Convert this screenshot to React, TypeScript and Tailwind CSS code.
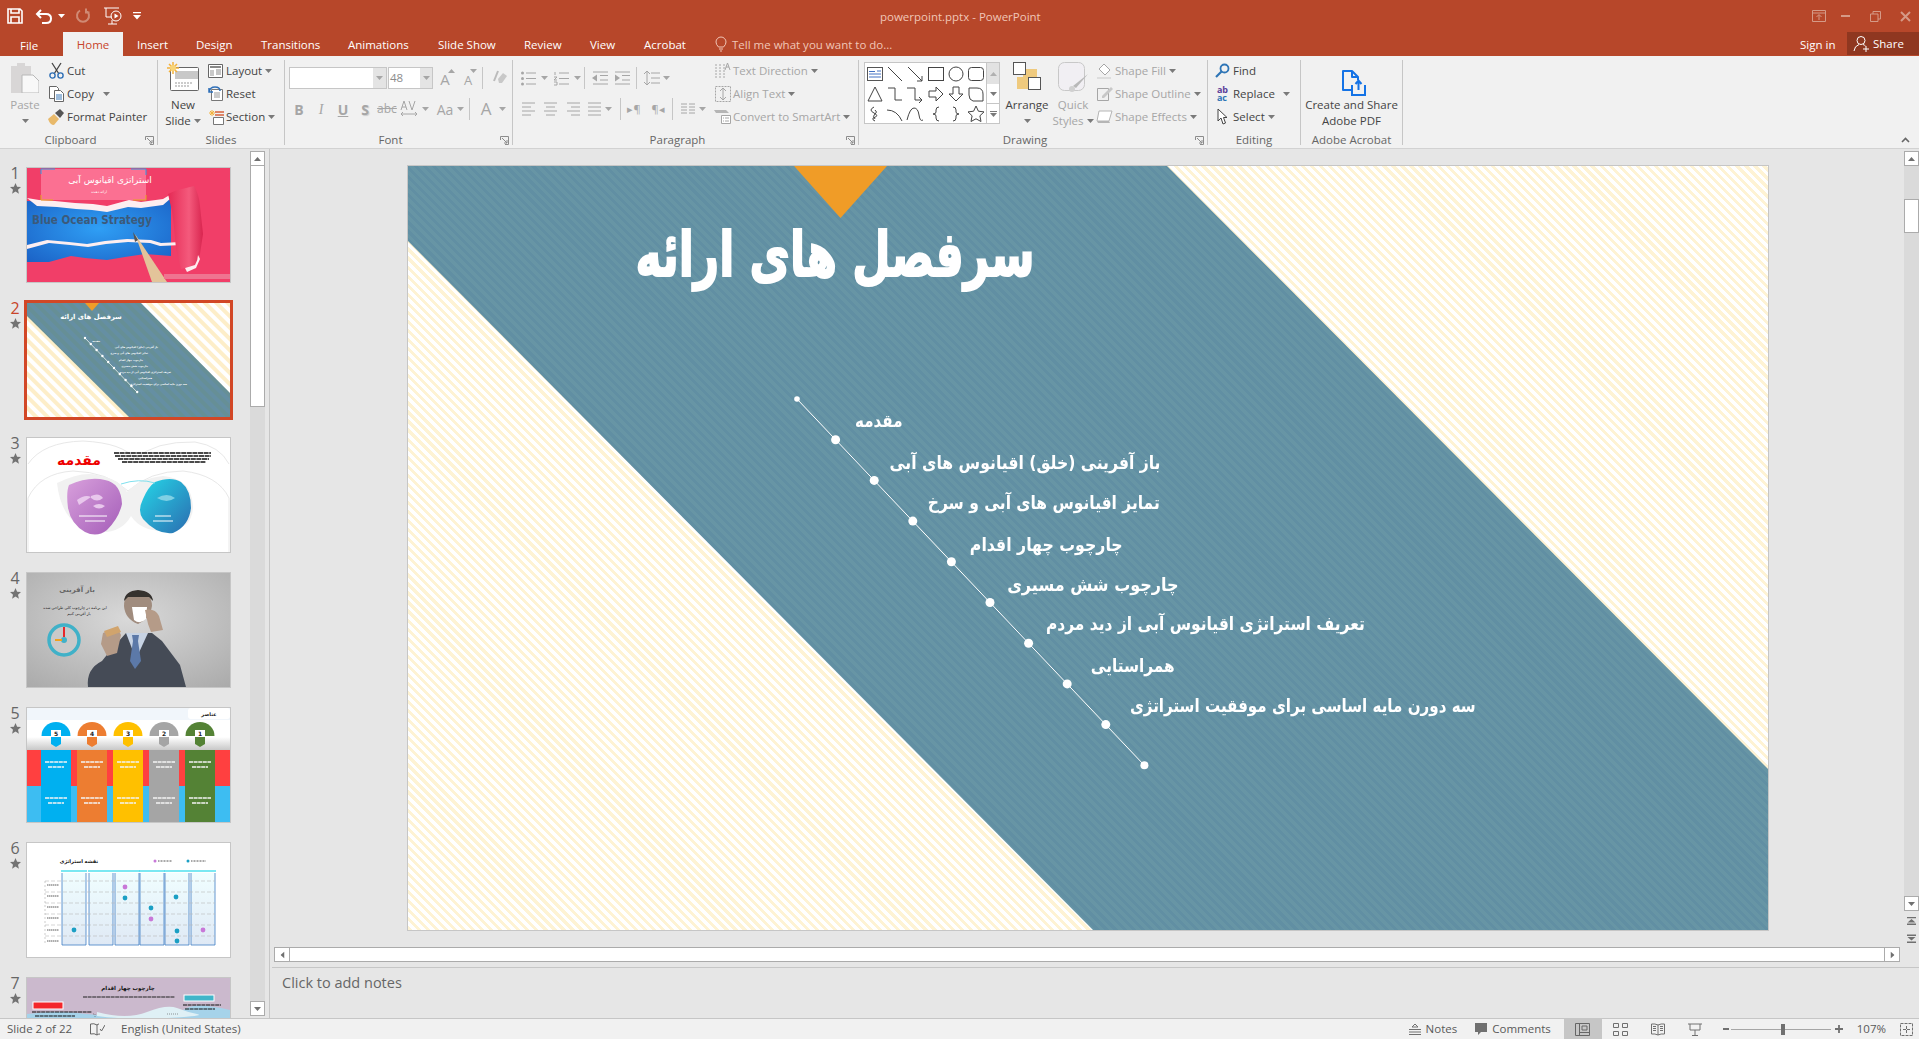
import React from "react";

const GRAY = "#a6a6a6";

function Caret({ className = "" }: { className?: string }) {
  return (
    <svg width="7" height="4" viewBox="0 0 7 4" className={`shrink-0 ${className}`}>
      <path d="M0 0h7L3.5 4z" fill="currentColor" />
    </svg>
  );
}

function Launcher() {
  return (
    <svg width="9" height="9" viewBox="0 0 9 9" className="absolute bottom-[0px] right-[3px]">
      <path d="M.5 4V.5H8.5V8.5H5" fill="none" stroke="#8c8c8c" />
      <path d="M2 2l5 5M7 4v3H4" fill="none" stroke="#8c8c8c" />
    </svg>
  );
}

function Group({ label, className, launcher, children }: { label: string; className: string; launcher?: boolean; children: React.ReactNode }) {
  return (
    <div className={`relative mt-1 flex h-[85px] shrink-0 flex-col border-r border-[#c6c6c6] ${className}`}>
      <div className="flex h-[71px] shrink-0">{children}</div>
      <div className={`h-[14px] text-center text-[#666666] leading-[18px] ${launcher ? "pr-[16px]" : ""}`}>{label}</div>
      {launcher && <Launcher />}
    </div>
  );
}

function Small({ icon, text, caret, disabled, className = "" }: { icon: React.ReactNode; text: string; caret?: boolean; disabled?: boolean; className?: string }) {
  return (
    <div className={`flex h-[23px] items-center whitespace-nowrap ${disabled ? "text-[#a6a6a6]" : "text-[#444444]"} ${className}`}>
      <span className="flex w-[17px] shrink-0 items-center justify-center">{icon}</span>
      <span className="ml-[2px]">{text}</span>
      {caret && <Caret className="ml-[3px] text-[#7a7a7a]" />}
    </div>
  );
}

function Big({ icon, lines, caret, dropBelow, disabled, className }: { icon: React.ReactNode; lines: string[]; caret?: boolean; dropBelow?: boolean; disabled?: boolean; className: string }) {
  return (
    <div className={`flex shrink-0 flex-col items-center leading-[16px] ${disabled ? "text-[#a6a6a6]" : "text-[#444444]"} ${className}`}>
      <div className="flex h-[37px] items-center">{icon}</div>
      {lines.map((l, i) => (
        <span key={l} className="flex items-center whitespace-nowrap">
          {l}
          {caret && i === lines.length - 1 && <Caret className="ml-[3px] text-[#7a7a7a]" />}
        </span>
      ))}
      {dropBelow && <Caret className="mt-[6px] text-[#7a7a7a]" />}
    </div>
  );
}

function Cell({ className = "w-[22px]", children }: { className?: string; children: React.ReactNode }) {
  return <span className={`flex shrink-0 items-center justify-center ${className}`}>{children}</span>;
}

function Lines({ kind }: { kind: "l" | "c" | "r" | "j" }) {
  const d = {
    l: "M1 2h13M1 6h9M1 10h13M1 14h9",
    c: "M1 2h13M3 6h9M1 10h13M3 14h9",
    r: "M1 2h13M5 6h9M1 10h13M5 14h9",
    j: "M1 2h13M1 6h13M1 10h13M1 14h13",
  }[kind];
  return (
    <svg width="15" height="16" viewBox="0 0 15 16">
      <path d={d} stroke={GRAY} fill="none" />
    </svg>
  );
}

const ShapeIcons = [
  <g key="a"><rect x="1.5" y="2.5" width="15" height="13" stroke="#555" fill="#fff" /><path d="M3 6.5h6M11 6h4M3 9h12M3 12h12" stroke="#4472c4" /></g>,
  <path key="b" d="M2 2l14 14" stroke="#444" />,
  <path key="c" d="M2 2l14 14M16 11v5h-5" stroke="#444" fill="none" />,
  <rect key="d" x="1.5" y="2.5" width="15" height="13" stroke="#444" fill="none" />,
  <circle key="e" cx="9" cy="9" r="7" stroke="#444" fill="none" />,
  <rect key="f" x="1.5" y="2.5" width="15" height="13" rx="3" stroke="#444" fill="none" />,
  <path key="g" d="M9 2l7 14H2z" stroke="#444" fill="none" />,
  <path key="h" d="M2 3h7v12h7" stroke="#444" fill="none" />,
  <path key="i" d="M1 3h8v12h7M13 12l3 3-3 3" stroke="#444" fill="none" />,
  <path key="j" d="M2 6h7V2l7 7-7 7v-4H2z" stroke="#444" fill="none" />,
  <path key="k" d="M6 2h6v7h4l-7 7-7-7h4z" stroke="#444" fill="none" />,
  <path key="l" d="M2 3h8q6 0 6 6v7H6q-4-1-4-6z" stroke="#444" fill="none" />,
  <path key="m" d="M8 2q-6 3 0 6t-1 5q-1 2 2 3M9 5q3 2 0 4t0 5" stroke="#444" fill="none" />,
  <path key="n" d="M1 5q10 0 15 11" stroke="#444" fill="none" />,
  <path key="o" d="M1 15Q4 3 8 3t5 7 4 5" stroke="#444" fill="none" />,
  <path key="p" d="M12 2Q9 2 9 5v2q0 2-3 2 3 0 3 2v2q0 3 3 3" stroke="#444" fill="none" />,
  <path key="q" d="M6 2q3 0 3 3v2q0 2 3 2-3 0-3 2v2q0 3-3 3" stroke="#444" fill="none" />,
  <path key="r" d="M9 1l2.4 5.2 5.6.7-4.1 3.9 1.1 5.7L9 13.8l-5 2.7 1.1-5.7L1 6.9l5.6-.7z" stroke="#444" fill="none" />,
];

function TitleBar() {
  return (
    <div className="relative flex h-[32px] items-center bg-[#b7472a] text-[#f1c6b7]">
      <svg width="16" height="16" viewBox="0 0 16 16" className="ml-[7px]">
        <path d="M1 1h12l2 2v12H1z M4 1v4h8V1 M4 15v-6h8v6" fill="none" stroke="#fff" strokeWidth="1.6" />
      </svg>
      <svg width="18" height="16" viewBox="0 0 18 16" className="ml-[12px]">
        <path d="M2 6h9q5 0 5 4.500T11 15H7M6 2L2 6l4 4" fill="none" stroke="#fff" strokeWidth="2" />
      </svg>
      <Caret className="ml-[5px] text-white" />
      <svg width="16" height="16" viewBox="0 0 16 16" className="ml-[10px]">
        <path d="M11 2.500a6 6 0 1 1-6 0M11 0.500v4h3.500" fill="none" stroke="#d08a74" strokeWidth="2" />
      </svg>
      <svg width="20" height="20" viewBox="0 0 20 20" className="ml-[12px]">
        <path d="M1 2h15M3 2v9h6M5 18h9M9 14v4" fill="none" stroke="#fff" />
        <circle cx="13" cy="10" r="5" fill="none" stroke="#fff" />
        <path d="M11.500 7.500v5l4-2.500z" fill="#fff" />
      </svg>
      <svg width="8" height="8" viewBox="0 0 8 8" className="ml-[10px]">
        <path d="M0 0h8v1.300H0zM0 3h8L4 7.500z" fill="#fff" />
      </svg>
      <span className="absolute left-[880px] top-[9px] whitespace-nowrap leading-[16px]">powerpoint.pptx - PowerPoint</span>
      <div className="ml-auto flex items-center">
        <svg width="14" height="12" viewBox="0 0 14 12" className="mr-[15px]">
          <path d="M.5.500h13v11H.5zM.5 3h13M7 10V5M4.500 7L7 4.500 9.500 7" fill="none" stroke="#d59a87" />
        </svg>
        <span className="mr-[20px] h-[2px] w-[9px] bg-[#d59a87]" />
        <svg width="11" height="11" viewBox="0 0 11 11" className="mr-[19px]">
          <path d="M.5 3h7.500v7.500H.5zM3 3V.5h7.500V8H8" fill="none" stroke="#d59a87" />
        </svg>
        <svg width="11" height="11" viewBox="0 0 11 11" className="mr-[8px]">
          <path d="M1 1l9 9M10 1l-9 9" stroke="#d59a87" strokeWidth="2" />
        </svg>
      </div>
    </div>
  );
}

function TabBar() {
  const tab = "absolute top-[3px] leading-[20px] whitespace-nowrap";
  return (
    <div className="relative h-[24px] bg-[#b7472a] text-white">
      <span className="absolute left-[20px] top-[4px] leading-[20px]">File</span>
      <span className="absolute left-[63px] top-0 h-[24px] w-[60px] bg-[#f1f1f1] pt-[3px] text-center leading-[20px] text-[#c8452a]">Home</span>
      <span className={`${tab} left-[137px]`}>Insert</span>
      <span className={`${tab} left-[196px]`}>Design</span>
      <span className={`${tab} left-[261px]`}>Transitions</span>
      <span className={`${tab} left-[348px]`}>Animations</span>
      <span className={`${tab} left-[438px]`}>Slide Show</span>
      <span className={`${tab} left-[524px]`}>Review</span>
      <span className={`${tab} left-[590px]`}>View</span>
      <span className={`${tab} left-[644px]`}>Acrobat</span>
      <svg width="12" height="16" viewBox="0 0 12 16" className="absolute left-[715px] top-[4px]">
        <path d="M3.500 11Q1 8.500 1 6a5 5 0 0 1 10 0q0 2.500-2.500 5zM4 13h4M5 15h2" fill="none" stroke="#f1c6b7" />
      </svg>
      <span className={`${tab} left-[732px] text-[#f1c6b7]`}>Tell me what you want to do...</span>
      <span className={`${tab} left-[1800px]`}>Sign in</span>
      <div className="absolute left-[1847px] top-0 flex h-[23px] w-[72px] items-center bg-[#8f3720] pl-[6px]">
        <svg width="17" height="17" viewBox="0 0 17 17">
          <circle cx="8" cy="5.500" r="4" fill="none" stroke="#fff" />
          <path d="M1 16q.5-5 5-6.500M10 9.500q1.500.5 2.500 1.500M10 14h6M13 11v6" fill="none" stroke="#fff" />
        </svg>
        <span className="ml-[3px]">Share</span>
      </div>
    </div>
  );
}

function Ribbon() {
  return (
    <div className="relative flex h-[93px] border-b border-[#d2d2d2] bg-[#f1f1f1] text-[#444444]">
      <Group label="Clipboard" className="w-[158px]" launcher>
        <Big
          className="ml-[5px] w-[40px]"
          disabled
          dropBelow
          lines={["Paste"]}
          icon={
            <svg width="28" height="30" viewBox="0 0 28 30" className="-mt-[2px]">
              <path d="M0 3h6V0h8v3h6v27H0z" fill="#d8d6d6" />
              <path d="M11 12h11l6 6v12H11z" fill="#f8f8f8" stroke="#b8b8b8" />
            </svg>
          }
        />
        <div className="-mt-[1px] ml-[3px] flex flex-col">
          <Small text="Cut" icon={<svg width="15" height="17" viewBox="0 0 15 17"><path d="M3 1l7 11M12 1L5 12" stroke="#444" strokeWidth="1.300" /><circle cx="3.500" cy="13.500" r="2.600" fill="none" stroke="#2f6fb5" strokeWidth="1.400" /><circle cx="11.500" cy="13.500" r="2.600" fill="none" stroke="#2f6fb5" strokeWidth="1.400" /></svg>} />
          <div className="flex items-center">
            <Small text="Copy" icon={<svg width="15" height="16" viewBox="0 0 15 16"><path d="M.5.500h7l2 2v10H.5z" fill="#fff" stroke="#666" /><path d="M5.500 4.500h6l3 3v8h-9z" fill="#fff" stroke="#666" /><path d="M7 9h6M7 11h6M7 13h6" stroke="#3b78b8" /></svg>} />
            <Caret className="ml-[9px] text-[#7a7a7a]" />
          </div>
          <Small text="Format Painter" icon={<svg width="17" height="17" viewBox="0 0 17 17"><path d="M0 11l6-5 5 5-5 6q-4 0-6-6z" fill="#e8b96a" /><path d="M7 5l5-4 4 4-4 5z" fill="#555" /></svg>} />
        </div>
      </Group>

      <Group label="Slides" className="w-[127px]">
        <Big
          className="ml-[1px] w-[48px]"
          caret
          lines={["New", "Slide"]}
          icon={
            <svg width="32" height="29" viewBox="0 0 32 29" className="-mt-[4px]">
              <rect x="3.500" y="5.500" width="28" height="23" rx="1" fill="#fff" stroke="#666" />
              <rect x="8" y="9" width="23" height="8" fill="#c8c8c8" />
              <path d="M8 21h18M8 24h14" stroke="#999" strokeDasharray="2 1" />
              <path d="M6 0v12M0 6h12M2 2l8 8M10 2l-8 8" stroke="#f3b13b" strokeWidth="1.500" />
              <circle cx="6" cy="6" r="3" fill="#f8d477" />
            </svg>
          }
        />
        <div className="-mt-[1px] flex flex-col">
          <Small text="Layout" caret icon={<svg width="15" height="14" viewBox="0 0 15 14"><path d="M.5.500h14v13H.5z" fill="#fff" stroke="#666" /><path d="M2 2h11v2H2z" fill="#888" /><path d="M2 6h4v6H2z" fill="#c8c8c8" /><path d="M8 6h5M8 8h5M8 10h5" stroke="#888" /></svg>} />
          <Small text="Reset" icon={<svg width="15" height="15" viewBox="0 0 15 15"><path d="M3.500 3.500h11v11h-11z" fill="#fff" stroke="#777" /><path d="M6 7h6M6 9h6M6 11h6" stroke="#999" /><path d="M1 6q1-5 6-5t5 4M1 2v4h4" fill="none" stroke="#2e6fb8" strokeWidth="1.500" /></svg>} />
          <Small text="Section" caret icon={<svg width="16" height="16" viewBox="0 0 16 16"><path d="M4 1v6M1 4h6M2 2l4 4M6 2L2 6" stroke="#f3b13b" /><path d="M7 3h9M7 6h9" stroke="#d8613a" strokeWidth="1.400" /><path d="M5.500 8.500h10v7h-10z" fill="#fff" stroke="#777" /></svg>} />
        </div>
      </Group>

      <Group label="Font" className="w-[228px]" launcher>
        <div className="flex w-full flex-col pl-[3px] text-[#a6a6a6]">
          <div className="mt-[7px] flex h-[22px] items-center">
            <div className="ml-[1px] flex h-[22px] w-[98px] border border-[#c6c6c6] bg-white">
              <span className="flex-1" />
              <span className="flex w-[13px] items-center justify-center bg-[#e4e4e4]"><Caret /></span>
            </div>
            <div className="ml-[1px] flex h-[22px] w-[45px] border border-[#c6c6c6] bg-white">
              <span className="flex-1 pl-[1px] leading-[20px] text-[#8c8c8c]">48</span>
              <span className="flex w-[12px] items-center justify-center bg-[#e4e4e4]"><Caret /></span>
            </div>
            <Cell className="ml-[1px] w-[22px]"><span className="relative pt-[2px] text-[15px] leading-[18px]">A<Caret className="absolute -right-[5px] top-[1px] rotate-180" /></span></Cell>
            <Cell className="ml-[1px] w-[22px]"><span className="relative pt-[3px] text-[13px] leading-[18px]">A<Caret className="absolute -right-[5px] top-[1px]" /></span></Cell>
            <span className="ml-[3px] h-[22px] w-px bg-[#c6c6c6]" />
            <Cell className="ml-[4px] w-[24px]">
              <svg width="17" height="16" viewBox="0 0 17 16"><path d="M3 11L7 1" stroke="#bbb" strokeWidth="2" /><path d="M7 9l5-6 4 3-5 7H8z" fill="#c8c8c8" /></svg>
            </Cell>
          </div>
          <div className="mt-[9px] flex h-[22px] items-center text-[14px]">
            <Cell><b>B</b></Cell>
            <Cell><i className="font-['Liberation_Serif',serif]">I</i></Cell>
            <Cell><span className="font-bold underline">U</span></Cell>
            <Cell><b className="[text-shadow:1px_1px_1px_#ccc]">S</b></Cell>
            <Cell><span className="text-[12px] line-through">abc</span></Cell>
            <Cell>
              <svg width="19" height="18" viewBox="0 0 19 18"><path d="M1 10L4 1l3 9M2 7h4M9 1l3 9 3-9M1 14h16M3 12l-2 2 2 2M15 12l2 2-2 2" fill="none" stroke={GRAY} /></svg>
            </Cell>
            <Cell className="w-[10px]"><Caret /></Cell>
            <Cell className="ml-[3px] w-[24px]">Aa</Cell>
            <Cell className="w-[7px]"><Caret /></Cell>
            <span className="ml-[5px] h-[22px] w-px bg-[#c6c6c6]" />
            <Cell className="ml-[5px] w-[22px]"><span className="text-[17px] font-medium">A</span></Cell>
            <Cell className="w-[10px]"><Caret /></Cell>
          </div>
        </div>
      </Group>

      <Group label="Paragraph" className="w-[346px]" launcher>
        <div className="flex w-[203px] flex-col pl-[7px] text-[#a6a6a6]">
          <div className="mt-[7px] flex h-[22px] items-center">
            <Cell className="w-[16px]">
              <svg width="15" height="15" viewBox="0 0 15 15"><path d="M5 2h10M5 7.500h10M5 13h10" stroke={GRAY} /><circle cx="1.500" cy="2" r="1.500" fill={GRAY} /><circle cx="1.500" cy="7.500" r="1.500" fill={GRAY} /><circle cx="1.500" cy="13" r="1.500" fill={GRAY} /></svg>
            </Cell>
            <Cell className="ml-[3px] w-[10px]"><Caret /></Cell>
            <Cell className="ml-[4px] w-[16px]">
              <svg width="15" height="15" viewBox="0 0 15 15"><path d="M5 2h10M5 7.500h10M5 13h10M1 1v3M0 6h3L0 9h3M0 11h3v3H0" fill="none" stroke={GRAY} /></svg>
            </Cell>
            <Cell className="ml-[3px] w-[10px]"><Caret /></Cell>
            <span className="ml-[2px] h-[22px] w-px bg-[#c6c6c6]" />
            <Cell className="ml-[6px] w-[18px]">
              <svg width="16" height="14" viewBox="0 0 16 14"><path d="M1 1h15M8 4.500h8M8 9h8M1 13h15" stroke={GRAY} /><path d="M0 7l5-3.500v7z" fill={GRAY} /></svg>
            </Cell>
            <Cell className="ml-[4px] w-[18px]">
              <svg width="16" height="14" viewBox="0 0 16 14"><path d="M1 1h15M8 4.500h8M8 9h8M1 13h15" stroke={GRAY} /><path d="M6 7L1 3.500v7z" fill={GRAY} /></svg>
            </Cell>
            <span className="ml-[5px] h-[22px] w-px bg-[#c6c6c6]" />
            <Cell className="ml-[6px] w-[18px]">
              <svg width="16" height="16" viewBox="0 0 16 16"><path d="M7 3h9M7 8h9M7 13h9M3 2v12M0 4l3-3 3 3M0 12l3 3 3-3" fill="none" stroke={GRAY} /></svg>
            </Cell>
            <Cell className="w-[10px]"><Caret /></Cell>
          </div>
          <div className="mt-[9px] flex h-[22px] items-center">
            <Cell className="ml-[-1px] w-[18px]"><Lines kind="l" /></Cell>
            <Cell className="ml-[4px] w-[18px]"><Lines kind="c" /></Cell>
            <Cell className="ml-[5px] w-[18px]"><Lines kind="r" /></Cell>
            <Cell className="ml-[3px] w-[18px]"><Lines kind="j" /></Cell>
            <Cell className="w-[10px]"><Caret /></Cell>
            <span className="ml-[7px] h-[22px] w-px bg-[#c6c6c6]" />
            <Cell className="ml-[3px] w-[20px]"><span className="text-[11px]">▸¶</span></Cell>
            <Cell className="ml-[4px] w-[20px]"><span className="text-[11px]">¶◂</span></Cell>
            <span className="ml-[4px] h-[22px] w-px bg-[#c6c6c6]" />
            <Cell className="ml-[6px] w-[18px]">
              <svg width="14" height="12" viewBox="0 0 14 12"><path d="M0 1h6M8 1h6M0 4h6M8 4h6M0 7h6M8 7h6M0 10h6M8 10h6" stroke={GRAY} /></svg>
            </Cell>
            <Cell className="w-[10px]"><Caret /></Cell>
          </div>
        </div>
        <div className="-ml-[2px] -mt-[1px] flex flex-col">
          <Small disabled caret text="Text Direction" icon={<svg width="16" height="18" viewBox="0 0 16 18"><path d="M1 2v14M5 2v14M9 2v14" stroke={GRAY} strokeDasharray="2 1" /><path d="M10 8l2.500-7L15 8M11 5h3" fill="none" stroke={GRAY} /></svg>} />
          <Small disabled caret text="Align Text" icon={<svg width="16" height="16" viewBox="0 0 16 16"><path d="M.5.500h15v15H.5z" fill="none" stroke={GRAY} strokeDasharray="2 1" /><path d="M8 3v10M5 5l3-3 3 3M5 11l3 3 3-3" fill="none" stroke={GRAY} /></svg>} />
          <Small disabled caret text="Convert to SmartArt" icon={<svg width="17" height="15" viewBox="0 0 17 15"><path d="M0 1h12l3 3H2z" fill="#b5b5b5" /><path d="M7.500 6.500h9v8h-9z" fill="#fff" stroke={GRAY} /><path d="M9 9h1M11 9h4M9 12h1M11 12h4" stroke={GRAY} /></svg>} />
        </div>
      </Group>

      <Group label="Drawing" className="w-[349px]" launcher>
        <div className="ml-[5px] mt-[2px] flex h-[62px] w-[136px] shrink-0 border border-[#c6c6c6] bg-white">
          <div className="grid h-full w-[122px] grid-cols-6 content-start pt-[1px]">
            {ShapeIcons.map((s, i) => (
              <span key={i} className="flex h-[20px] w-[20px] items-center justify-center">
                <svg width="18" height="18" viewBox="0 0 18 18">{s}</svg>
              </span>
            ))}
          </div>
          <div className="flex w-[13px] flex-col border-l border-[#c6c6c6] text-[#7a7a7a]">
            <span className="flex h-[21px] items-center justify-center bg-[#e2e2e2] text-[#b0b0b0]"><Caret className="rotate-180" /></span>
            <span className="flex h-[20px] items-center justify-center border-b border-[#c6c6c6]"><Caret /></span>
            <span className="flex flex-1 flex-col items-center justify-center gap-[1px]"><span className="h-px w-[7px] bg-[#7a7a7a]" /><Caret /></span>
          </div>
        </div>
        <Big
          className="w-[54px]"
          dropBelow
          lines={["Arrange"]}
          icon={
            <svg width="28" height="28" viewBox="0 0 28 28" className="-mt-[6px]">
              <rect x="10" y="7" width="14" height="14" fill="#efca7e" />
              <rect x="4" y="15" width="12" height="12" fill="#efca7e" />
              <rect x=".5" y=".5" width="12" height="12" fill="#fff" stroke="#555" />
              <rect x="15.500" y="15.500" width="12" height="12" fill="#fff" stroke="#555" />
            </svg>
          }
        />
        <Big
          className="w-[38px]"
          disabled
          caret
          lines={["Quick", "Styles"]}
          icon={
            <svg width="30" height="32" viewBox="0 0 30 32" className="-mt-[1px]">
              <rect x=".5" y=".5" width="26" height="28" rx="6" fill="#f1eff3" stroke="#c8c8c8" />
              <path d="M30 12L18 26l-3-2z" fill="#b8b8b8" />
              <circle cx="14" cy="27" r="3" fill="#d0d0d0" />
            </svg>
          }
        />
        <div className="ml-[4px] -mt-[1px] flex flex-col">
          <Small disabled caret text="Shape Fill" icon={<svg width="16" height="16" viewBox="0 0 16 16"><path d="M7 1l6 6-5 5-6-6z" fill="#fff" stroke={GRAY} /><path d="M0 14h14v2H0z" fill="#ddd" /></svg>} />
          <Small disabled caret text="Shape Outline" icon={<svg width="16" height="15" viewBox="0 0 16 15"><path d="M.5 2.500h11v12H.5z" fill="none" stroke={GRAY} /><path d="M5 10L14 1l2 2-9 9H5z" fill="#c8c8c8" /></svg>} />
          <Small disabled caret text="Shape Effects" icon={<svg width="17" height="15" viewBox="0 0 17 15"><path d="M3 2h13l-3 10H1z" fill="#fff" stroke="#b5b5b5" /><path d="M1 12h12l1 2H2z" fill="#b5b5b5" /></svg>} />
        </div>
      </Group>

      <Group label="Editing" className="w-[93px]">
        <div className="-mt-[1px] ml-[6px] flex flex-col">
          <Small text="Find" icon={<svg width="15" height="15" viewBox="0 0 15 15"><circle cx="9.500" cy="5.500" r="4" fill="none" stroke="#2e75b6" strokeWidth="1.800" /><path d="M6.500 8.500L1 14" stroke="#2e75b6" strokeWidth="2.200" /></svg>} />
          <div className="flex items-center">
            <Small text="Replace" icon={<span className="flex flex-col text-[9px] font-bold leading-[8px]"><span className="text-[#5b3f99]">ab</span><span className="text-[#2e75b6]">ac</span></span>} />
            <Caret className="ml-[8px] text-[#7a7a7a]" />
          </div>
          <Small text="Select" caret icon={<svg width="11" height="17" viewBox="0 0 11 17"><path d="M1 1v12l3-3 2 6 2.500-1-2-5.500H10z" fill="#fff" stroke="#444" /></svg>} />
        </div>
      </Group>

      <Group label="Adobe Acrobat" className="w-[102px]">
        <Big
          className="w-full"
          lines={["Create and Share", "Adobe PDF"]}
          icon={
            <svg width="24" height="26" viewBox="0 0 24 26" className="ml-[4px] mt-[8px]">
              <path d="M9 20H1V1h9l6 6v3M10 1v6h6" fill="none" stroke="#1473e6" strokeWidth="2" strokeLinejoin="round" />
              <path d="M10 15v10h13V15M16.500 20V11M13.500 14l3-3.500 3 3.500" fill="none" stroke="#1473e6" strokeWidth="2" />
            </svg>
          }
        />
      </Group>

      <svg width="9" height="6" viewBox="0 0 9 6" className="absolute bottom-[5px] right-[9px]">
        <path d="M1 5l3.500-3.500L8 5" fill="none" stroke="#666" strokeWidth="1.600" />
      </svg>
    </div>
  );
}

function Thumb1() {
  return (
    <svg viewBox="0 0 203 114" className="h-full w-full" preserveAspectRatio="none">
      <defs>
        <radialGradient id="t1b" cx=".5" cy=".5" r=".7">
          <stop offset="0" stopColor="#2f9ff5" />
          <stop offset="1" stopColor="#1b62c6" />
        </radialGradient>
        <linearGradient id="t1c" x1="0" x2="1">
          <stop offset="0" stopColor="#e52a55" />
          <stop offset=".6" stopColor="#f45a7c" />
          <stop offset="1" stopColor="#d9254f" />
        </linearGradient>
      </defs>
      <rect width="203" height="114" fill="#f13e68" />
      <path d="M0 33l28 1 30 2 10 1 12 2 20-5 14 1 22-3 8-5v61l-26-2-20 3-18 3-22-2-14-2-22 6H0z" fill="url(#t1b)" />
      <path d="M0 30l12 2 16 1 20 2 18 1 14 2 22-6 12 2 22-3 10-6 14-3 7 2-10 6-14 1-7 6-22 3-13-1-21 5-15-2-16-1-19-2-20-1z" fill="#fdeef0" />
      <path d="M0 77l20-5 22 2 18 2 18-3 22-2 24 1 10 3 20-1 1 3-22 1-10-3-22-1-22 2-18 3-18-2-21-2-22 6z" fill="#fdeef0" />
      <rect x="14" y="1" width="105" height="31" fill="#fb7092" />
      <text x="83" y="15" textAnchor="middle" direction="rtl" fontFamily="DejaVu Sans" fontSize="9" fill="#fff">استراتژی اقیانوس آبی</text>
      <text x="72" y="25" textAnchor="middle" fontFamily="DejaVu Sans" fontSize="3.500" fill="#fff">ارائه دهنده</text>
      <path d="M14 6V1h14M104 1h15v6" fill="none" stroke="#2e9be6" />
      <path d="M14 27v5h12M106 32h13v-5" fill="none" stroke="#e4a81e" />
      <text x="5" y="56" fontFamily="DejaVu Sans" fontWeight="700" fontSize="11.500" textLength="120" lengthAdjust="spacingAndGlyphs" fill="#3c5a7a">Blue Ocean Strategy</text>
      <path d="M141 26q8-4 14-5l12-3q5 8 6 20l3 28-3 20-5 11-14 4-3-12-2-8-2-22-2-16z" fill="url(#t1c)" />
      <path d="M158 100l10-3q3-5 3-10l2 4-4 9-9 4z" fill="#fdeef0" />
      <path d="M108 66l6 9 26 39h-15z" fill="#e3c49a" />
      <path d="M106 64l5 8-3 2z" fill="#555" />
      <rect x="137" y="106" width="66" height="5" fill="#ef7490" />
    </svg>
  );
}

function Thumb2() {
  const lines: [string, number, number][] = [
    ["مقدمه", 73, 39],
    ["باز آفرینی (خلق) اقیانوس های آبی", 131, 45],
    ["تمایز اقیانوس های آبی و سرخ", 121, 51],
    ["چارچوب چهار اقدام", 116, 58],
    ["چارچوب شش مسیری", 121, 64],
    ["تعریف استراتژی اقیانوس آبی از دید مردم", 144, 70],
    ["همراستایی", 125, 76],
    ["سه دورن مایه اساسی برای موفقیت استراتژی", 160, 82],
  ];
  return (
    <svg viewBox="0 0 203 114" className="h-full w-full" preserveAspectRatio="none">
      <defs>
        <pattern id="t2y" width="8" height="8" patternUnits="userSpaceOnUse" patternTransform="rotate(45)">
          <rect width="8" height="8" fill="#fff" />
          <rect width="8" height="4" fill="#fdeec9" />
        </pattern>
        <pattern id="t2t" width="8" height="8" patternUnits="userSpaceOnUse" patternTransform="rotate(45)">
          <rect width="8" height="8" fill="#658fa3" />
          <rect width="8" height="4" fill="#668f96" />
        </pattern>
      </defs>
      <rect width="203" height="114" fill="url(#t2y)" />
      <path d="M0 0h114l89 90v24H102L0 13z" fill="url(#t2t)" />
      <path d="M58 0h14l-7 8z" fill="#f09c27" />
      <text x="64" y="16" textAnchor="middle" direction="rtl" fontFamily="DejaVu Sans" fontWeight="700" fontSize="6.800" fill="#fff">سرفصل های ارائه</text>
      <path d="M58 35l52 54" stroke="#fff" strokeWidth=".7" />
      {[0, 1, 2, 3, 4, 5, 6, 7, 8, 9].map((i) => (
        <circle key={i} cx={58 + i * 5.800} cy={35 + i * 6} r="1.200" fill="#fff" />
      ))}
      {lines.map(([t, x, y]) => (
        <text key={t} x={x} y={y} direction="rtl" textAnchor="start" fontFamily="DejaVu Sans" fontWeight="700" fontSize="2.500" fill="#fff">{t}</text>
      ))}
    </svg>
  );
}

function Thumb3() {
  return (
    <svg viewBox="0 0 203 114" className="h-full w-full" preserveAspectRatio="none">
      <defs>
        <linearGradient id="t3p" x1="0" x2="1" y1="0" y2="1">
          <stop offset="0" stopColor="#d8a0dc" />
          <stop offset="1" stopColor="#a45db8" />
        </linearGradient>
        <linearGradient id="t3c" x1="0" x2="1" y1="0" y2="1">
          <stop offset="0" stopColor="#25d7e8" />
          <stop offset="1" stopColor="#2b6cb0" />
        </linearGradient>
      </defs>
      <rect width="203" height="114" fill="#fff" />
      <path d="M1 26q15-22 55-23 40 2 52 18 20-18 60-17 25 4 34 22M1 114V60q12-25 45-27 35 1 55 20 22-20 55-20 35 4 46 27v54" fill="none" stroke="#e8e8e8" />
      <path d="M30 45q25-12 40-8 22 4 30 17 14-14 36-16 28 2 30 30 0 25-30 25-22 0-32-15-10 18-34 16-35-5-40-49z" fill="#f1f1f1" />
      <path d="M42 47q20-9 36-5 16 3 17 24-3 14-15 26-10 8-22 2-14-8-17-24-2-16 1-23z" fill="url(#t3p)" />
      <path d="M128 44q16-6 26 0 10 8 10 26-2 18-18 25-16 2-30-14-6-8 0-20 5-12 12-17z" fill="url(#t3c)" />
      <path d="M94 46q18-6 34-1" fill="none" stroke="#7fe0ee" />
      <text x="52" y="27" textAnchor="middle" direction="rtl" fontFamily="DejaVu Sans" fontWeight="700" fontSize="14" fill="#ee0000">مقدمه</text>
      <path d="M87 15h97M88 18h96M91 21h91M95 24h84" stroke="#111" strokeWidth="1.500" strokeDasharray="5 .6" />
      <path d="M52 78h28M58 83h20M128 78h16M126 83h20" stroke="#fff" strokeWidth="1" />
      <path d="M50 62q8-6 14-3l-12 8zM64 58q8-4 12 2-6 5-12 0zM66 68q6-4 12 0-6 5-12 0z" fill="#e8c7ec" />
      <path d="M130 60q10-6 18 0-8 6-18 0z" fill="#7fd0e4" />
    </svg>
  );
}

function Thumb4() {
  return (
    <svg viewBox="0 0 203 114" className="h-full w-full" preserveAspectRatio="none">
      <defs>
        <radialGradient id="t4b" cx=".5" cy=".4" r=".8">
          <stop offset="0" stopColor="#d9d9d9" />
          <stop offset="1" stopColor="#a9a9a9" />
        </radialGradient>
        <filter id="t4f"><feGaussianBlur stdDeviation=".6" /></filter>
      </defs>
      <rect width="203" height="114" fill="url(#t4b)" />
      <text x="50" y="19" textAnchor="middle" direction="rtl" fontFamily="DejaVu Sans" fontWeight="700" fontSize="7" fill="#666">باز آفرینی</text>
      <text x="48" y="36" textAnchor="middle" direction="rtl" fontFamily="DejaVu Sans" fontSize="3.800" fill="#222">این برنامه در چارچوب کلی طراحی شده</text>
      <text x="52" y="42" textAnchor="middle" direction="rtl" fontFamily="DejaVu Sans" fontSize="3.800" fill="#222">باز آفرینی کنیم</text>
      <circle cx="37" cy="67" r="15" fill="#c9c9c9" stroke="#40b1c8" strokeWidth="3.500" />
      <circle cx="37" cy="67" r="3" fill="#40b1c8" />
      <path d="M37 54v10" stroke="#e8262a" strokeWidth="2" />
      <path d="M28 67h7" stroke="#f2a11b" strokeWidth="2" />
      <g filter="url(#t4f)">
        <path d="M61 114q-2-18 14-26l8-10 16-18h26l10 8 18 24 6 22z" fill="#454b57" />
        <path d="M99 60l10 26 12-26z" fill="#c7d3e4" />
        <path d="M105 62h7l-1 6 3 20-6 8-5-8 3-20z" fill="#5c79a8" />
        <path d="M97 33q0-14 14-14 14 1 14 14-1 12-14 18-13-5-14-18z" fill="#a08c7e" />
        <path d="M97 28q1-10 14-11 14 1 15 11l-4-4H101z" fill="#35302e" />
        <path d="M105 34h15l-1 12q-6 6-12 1z" fill="#fff" />
        <path d="M118 37q10-2 14 6l4 14-12 2-3-8z" fill="#b59b88" />
        <path d="M76 60l14-6 4 8-4 18-10 3-6-12z" fill="#b59b88" />
        <path d="M77 58l14-5 3 6-14 5z" fill="#d1a46d" />
      </g>
    </svg>
  );
}

function Thumb5() {
  const cols: [number, string, string][] = [
    [14, "#00b0f0", "5"],
    [50, "#ed7d31", "4"],
    [86, "#ffc000", "3"],
    [122, "#a5a5a5", "2"],
    [158, "#548235", "1"],
  ];
  return (
    <svg viewBox="0 0 203 114" className="h-full w-full" preserveAspectRatio="none">
      <defs>
        <linearGradient id="t5g" x1="0" x2="0" y1="0" y2="1">
          <stop offset="0" stopColor="#fff" />
          <stop offset="1" stopColor="#c8c8c8" />
        </linearGradient>
      </defs>
      <rect width="203" height="114" fill="#fff" />
      <rect width="203" height="12" fill="#f1f6fb" />
      <rect x="161" width="42" height="11" rx="3" fill="#fff" />
      <text x="182" y="8" textAnchor="middle" direction="rtl" fontFamily="DejaVu Sans" fontWeight="700" fontSize="5" fill="#222">عناصر</text>
      <rect y="29" width="203" height="13" fill="url(#t5g)" />
      <rect y="42" width="203" height="36" fill="#ff4040" />
      <rect y="78" width="203" height="36" fill="#3dbdf2" />
      {cols.map(([x, c, n]) => (
        <g key={n}>
          <rect x={x} y="42" width="30" height="72" fill={c} />
          <path d={`M${x + 0.500} 28a14.500 14 0 0 1 29 0z`} fill={c} />
          <path d={`M${x + 10} 22h10v14l-5 3-5-3z`} fill={c} />
          <rect x={x + 10} y="22" width="10" height="7" fill="#fff" />
          <text x={x + 15} y="28" textAnchor="middle" fontFamily="DejaVu Sans" fontWeight="700" fontSize="6" fill="#222">{n}</text>
          <path d={`M${x + 4} 54h22M${x + 7} 59h16M${x + 4} 90h22M${x + 7} 95h16`} stroke="#f4f4f4" strokeWidth="1.600" strokeDasharray="4 .6" />
        </g>
      ))}
    </svg>
  );
}

function Thumb6() {
  const xs = [35, 62, 88, 113, 138, 164];
  const dots: [number, number, string][] = [
    [98, 44, "#c878d8"], [98, 55, "#1b9fc4"], [149, 54, "#1b9fc4"], [124, 65, "#1b9fc4"], [124, 76, "#c878d8"],
    [47, 87, "#1b9fc4"], [150, 88, "#1b9fc4"], [176, 87, "#c878d8"], [150, 98, "#1b9fc4"],
  ];
  return (
    <svg viewBox="0 0 203 114" className="h-full w-full" preserveAspectRatio="none">
      <defs>
        <linearGradient id="t6g" x1="0" x2="0" y1="0" y2="1">
          <stop offset="0" stopColor="#f0feff" />
          <stop offset="1" stopColor="#dfe9f5" />
        </linearGradient>
      </defs>
      <rect width="203" height="114" fill="#fff" />
      <text x="52" y="20" textAnchor="middle" direction="rtl" fontFamily="DejaVu Sans" fontWeight="700" fontSize="5" fill="#111">نقشه استراتژی</text>
      <circle cx="128" cy="18" r="1.500" fill="#c878d8" /><path d="M131 18h14" stroke="#555" strokeDasharray="1 .5" />
      <circle cx="161" cy="18" r="1.500" fill="#1b9fc4" /><path d="M164 18h15" stroke="#555" strokeDasharray="1 .5" />
      {xs.map((x) => (
        <g key={x}>
          <rect x={x} y="30" width="24" height="72" fill="url(#t6g)" />
          <path d={`M${x} 30v72h24V30`} fill="none" stroke="#3f7fc4" strokeWidth=".8" />
          <path d={`M${x - 1} 28h26`} stroke="#4fe0ee" strokeWidth="1.500" />
        </g>
      ))}
      {[38, 49, 60, 71, 82, 93].map((y) => (
        <path key={y} d={`M18 ${y}h170`} stroke="#bbb" strokeWidth=".6" strokeDasharray="4 2" />
      ))}
      <path d="M18 38v64" stroke="#999" strokeWidth=".5" strokeDasharray="2 2" />
      {[42, 53, 64, 75, 87, 98].map((y) => (
        <path key={y} d={`M20 ${y}h12`} stroke="#333" strokeWidth=".8" strokeDasharray="1.500 .5" />
      ))}
      {dots.map(([x, y, c]) => (
        <circle key={`${x}-${y}`} cx={x} cy={y} r="2.400" fill={c} />
      ))}
    </svg>
  );
}

function Thumb7() {
  return (
    <svg viewBox="0 0 203 114" className="h-full w-full" preserveAspectRatio="none">
      <rect width="203" height="114" fill="#cbb9cd" />
      <path d="M0 36q30-4 60 0t60 2 40-8 43 2v82H0z" fill="#a6d3ea" />
      <path d="M70 34q30 8 50 0t30-4 20 6-30 4-70-2z" fill="#dff0f5" />
      <text x="101" y="12" textAnchor="middle" direction="rtl" fontFamily="DejaVu Sans" fontWeight="700" fontSize="5.500" fill="#111">چارچوب چهار اقدام</text>
      <path d="M56 19h92" stroke="#222" strokeWidth="1.200" strokeDasharray="4 .6" />
      <rect x="6" y="24" width="30" height="7" fill="#f3262a" stroke="#fff" />
      <rect x="157" y="17" width="30" height="6" fill="#40b5c9" stroke="#fff" />
      <path d="M5 34h60M8 38h40M156 27h38M158 31h30" stroke="#111" strokeWidth="1.200" strokeDasharray="4 .6" />
      <path d="M66 36h2v10M140 36h12" fill="none" stroke="#555" strokeWidth=".6" strokeDasharray="1 1" />
    </svg>
  );
}

const thumbs = [Thumb1, Thumb2, Thumb3, Thumb4, Thumb5, Thumb6, Thumb7];

function ThumbPane() {
  return (
    <div className="flex w-[270px] shrink-0 border-r border-[#c6c6c6] bg-[#e6e6e6]">
      <div className="h-full w-[250px] overflow-hidden pt-[18px]">
        {thumbs.map((T, i) => (
          <div key={i} className="flex h-[135px] shrink-0">
            <div className="flex w-[26px] flex-col items-center pl-[4px]">
              <span className={`text-[16px] leading-[13px] ${i === 1 ? "text-[#c8452a]" : "text-[#666666]"}`}>{i + 1}</span>
              <svg width="11" height="11" viewBox="0 0 11 11" className="mt-[3px]">
                <path d="M5.500 0l1.600 3.700 3.900.4-3 2.600.9 4-3.400-2.100-3.400 2.100.9-4-3-2.600 3.900-.4z" fill="#737373" />
              </svg>
            </div>
            <div className={`h-[116px] w-[205px] overflow-hidden border bg-white ${i === 1 ? "border-[#d24726] ring-2 ring-[#d24726]" : "border-[#c6c6c6]"}`}>
              <T />
            </div>
          </div>
        ))}
      </div>
      <div className="flex h-full w-[15px] flex-col pt-[2px]">
        <ScrollBtn up />
        <div className="h-[241px] border-x border-b border-[#ababab] bg-white" />
        <div className="flex-1 bg-[#dadada]" />
        <ScrollBtn />
        <div className="h-[2px]" />
      </div>
    </div>
  );
}

function ScrollBtn({ up }: { up?: boolean }) {
  return (
    <div className="flex h-[15px] w-[15px] shrink-0 items-center justify-center border border-[#ababab] bg-white text-[#707070]">
      <Caret className={up ? "rotate-180" : ""} />
    </div>
  );
}

const rows = [
  { text: "مقدمه", cls: "top-[241px] right-[865px] scale-x-[.84]" },
  { text: "باز آفرینی (خلق) اقیانوس های آبی", cls: "top-[283px] right-[607px] scale-x-[.87]" },
  { text: "تمایز اقیانوس های آبی و سرخ", cls: "top-[323px] right-[608px] scale-x-[.86]" },
  { text: "چارچوب چهار اقدام", cls: "top-[365px] right-[645px] scale-x-[.875]" },
  { text: "چارچوب شش مسیری", cls: "top-[405px] right-[589px] scale-x-[.89]" },
  { text: "تعریف استراتژی اقیانوس آبی از دید مردم", cls: "top-[444px] right-[403px] scale-x-[.86]" },
  { text: "همراستایی", cls: "top-[486px] right-[593px] scale-x-[.85]" },
  { text: "سه دورن مایه اساسی برای موفقیت استراتژی", cls: "top-[526px] right-[292px] scale-x-[.84]" },
];

function Slide() {
  return (
    <div className="relative h-[766px] w-[1362px] shrink-0 overflow-hidden border border-[#c6c6c6] bg-[repeating-linear-gradient(45deg,#fef3d4_0,#fef3d4_3px,#ffffff_3px,#ffffff_6.400px)]">
      {/* teal band */}
      <div className="absolute inset-0 bg-[repeating-linear-gradient(45deg,#618fa3_0,#618fa3_3px,#6795a5_3px,#6795a5_6.400px)] [clip-path:polygon(0_0,759px_0,1361px_604px,1361px_765px,686px_765px,0_75px)]" />
      {/* orange notch */}
      <div className="absolute left-[386px] top-0 h-[52px] w-[93px] bg-[#f09c27] [clip-path:polygon(0_0,100%_0,50%_100%)]" />
      <div className="absolute left-[236px] top-[51px] flex w-[382px] justify-center">
        <h1 dir="rtl" className="shrink-0 scale-x-[.71] whitespace-nowrap font-['DejaVu_Sans',sans-serif] text-[62px] font-bold leading-[76px] text-white [-webkit-text-stroke:2px_white]">سرفصل های ارائه</h1>
      </div>
      <svg width="360" height="380" viewBox="0 0 360 380" className="absolute left-[386px] top-[230px]">
        <path d="M3 3l347 366" stroke="#fff" />
        <circle cx="3" cy="3" r="2.800" fill="#fff" />
        {[1, 2, 3, 4, 5, 6, 7, 8, 9].map((i) => (
          <circle key={i} cx={3 + i * 38.6} cy={3 + i * 40.7} r={i === 9 ? 4 : 4.500} fill="#fff" />
        ))}
      </svg>
      {rows.map((r) => (
        <p key={r.text} dir="rtl" className={`absolute origin-right whitespace-nowrap font-['DejaVu_Sans',sans-serif] text-[18px] font-bold leading-[28px] text-white ${r.cls}`}>{r.text}</p>
      ))}
    </div>
  );
}

function RightScroll() {
  return (
    <div className="flex w-[15px] shrink-0 flex-col items-center pt-[2px] text-[#707070]">
      <ScrollBtn up />
      <div className="h-[730px] w-full bg-[#dadada] pt-[33px]">
        <div className="h-[34px] w-full border border-[#ababab] bg-white" />
      </div>
      <ScrollBtn />
      <svg width="9" height="10" viewBox="0 0 9 10" className="mt-[5px]">
        <path d="M0 1h9v1.300H0zM4.500 3L8.500 6.500H.5zM0 7.500h9V9H0z" fill="#707070" />
      </svg>
      <svg width="9" height="10" viewBox="0 0 9 10" className="mt-[8px]">
        <path d="M0 .5h9V2H0zM.5 3h8L4.500 6.500zM0 7.500h9V9H0z" fill="#707070" />
      </svg>
    </div>
  );
}

function StatusBar() {
  return (
    <div className="flex h-[21px] items-center border-t border-[#c6c6c6] bg-[#f1f1f1] text-[#595959]">
      <span className="ml-[7px] w-[83px]">Slide 2 of 22</span>
      <svg width="15" height="15" viewBox="0 0 15 15">
        <path d="M7 3Q4 1 .5 2v10q4-1 6.500 1 0-5 0-10zM7 3q1-1 2-1M7 13q1-1 3-1M10 7l1.500 2L15 3" fill="none" stroke="#666" />
      </svg>
      <span className="ml-[16px]">English (United States)</span>
      <div className="ml-auto flex h-full items-center">
        <svg width="12" height="12" viewBox="0 0 12 12">
          <path d="M0 6.500h12M0 9h12M0 11.500h12M3 4l3-3 3 3z" stroke="#707070" fill="none" />
        </svg>
        <span className="ml-[5px]">Notes</span>
        <svg width="13" height="13" viewBox="0 0 13 13" className="ml-[18px]">
          <path d="M0 0h12v9H6l-3 3V9H0z" fill="#707070" />
        </svg>
        <span className="ml-[4px]">Comments</span>
        <span className="ml-[13px] flex h-full w-[38px] items-center justify-center bg-[#c6c6c6]">
          <svg width="15" height="13" viewBox="0 0 15 13"><path d="M.5.500h14v12H.5zM4.500.500v12M7 3h5v4H7zM4.500 9.500h10" fill="none" stroke="#666" /></svg>
        </span>
        <svg width="15" height="13" viewBox="0 0 15 13" className="ml-[11px]"><path d="M.5.500h5v4h-5zM9.500.500h5v4h-5zM.5 8.500h5v4h-5zM9.500 8.500h5v4h-5z" fill="none" stroke="#707070" /></svg>
        <svg width="14" height="13" viewBox="0 0 14 13" className="ml-[23px]"><path d="M.5 1Q4 .5 7 2q3-1.500 6.500-1v10Q10 10.500 7 12q-3-1.500-6.500-1zM7 2v10M2 3.500h3M2 5.500h3M2 7.500h3M9 3.500h3M9 5.500h3M9 7.500h3" fill="none" stroke="#707070" /></svg>
        <svg width="14" height="13" viewBox="0 0 14 13" className="ml-[23px]"><path d="M0 1h14M2 1v6h10V1M7 7v5M4 12.500h6" fill="none" stroke="#707070" /></svg>
        <span className="ml-[21px] h-[2px] w-[6px] bg-[#707070]" />
        <span className="relative ml-[2px] h-px w-[100px] bg-[#a6a6a6]">
          <span className="absolute -top-[5px] left-[50px] h-[11px] w-[4px] bg-[#707070]" />
        </span>
        <svg width="8" height="8" viewBox="0 0 8 8" className="ml-[4px]"><path d="M0 4h8M4 0v8" stroke="#707070" strokeWidth="1.800" /></svg>
        <span className="ml-[14px]">107%</span>
        <svg width="13" height="13" viewBox="0 0 13 13" className="ml-[14px] mr-[6px]"><path d="M.5.500h12v12H.5zM3 6.500h7M6.500 3v7" fill="none" stroke="#707070" strokeDasharray="3 1" /></svg>
      </div>
    </div>
  );
}

export default function App() {
  return (
    <div className="flex h-[1039px] w-[1919px] flex-col overflow-hidden bg-[#e6e6e6] font-['Open_Sans',sans-serif] text-[11.5px]">
      <TitleBar />
      <TabBar />
      <Ribbon />
      <div className="flex min-h-0 flex-1">
        <ThumbPane />
        <div className="flex min-w-0 flex-1 flex-col">
          <div className="flex min-h-0 flex-1">
            <div className="min-w-0 flex-1 pl-[137px] pt-[16px]">
              <Slide />
            </div>
            <RightScroll />
          </div>
          <div className="ml-[4px] mr-[19px] flex h-[15px] shrink-0 border border-[#ababab] bg-white">
            <span className="flex w-[15px] items-center justify-center border-r border-[#ababab] text-[#707070]"><Caret className="rotate-90" /></span>
            <span className="flex-1" />
            <span className="flex w-[15px] items-center justify-center border-l border-[#ababab] text-[#707070]"><Caret className="-rotate-90" /></span>
          </div>
          <div className="ml-[2px] mt-[5px] h-[51px] shrink-0 border-t border-[#c6c6c6] pl-[10px] pt-[4px] text-[14.500px] leading-[22px] text-[#666666]">Click to add notes</div>
        </div>
      </div>
      <StatusBar />
    </div>
  );
}
